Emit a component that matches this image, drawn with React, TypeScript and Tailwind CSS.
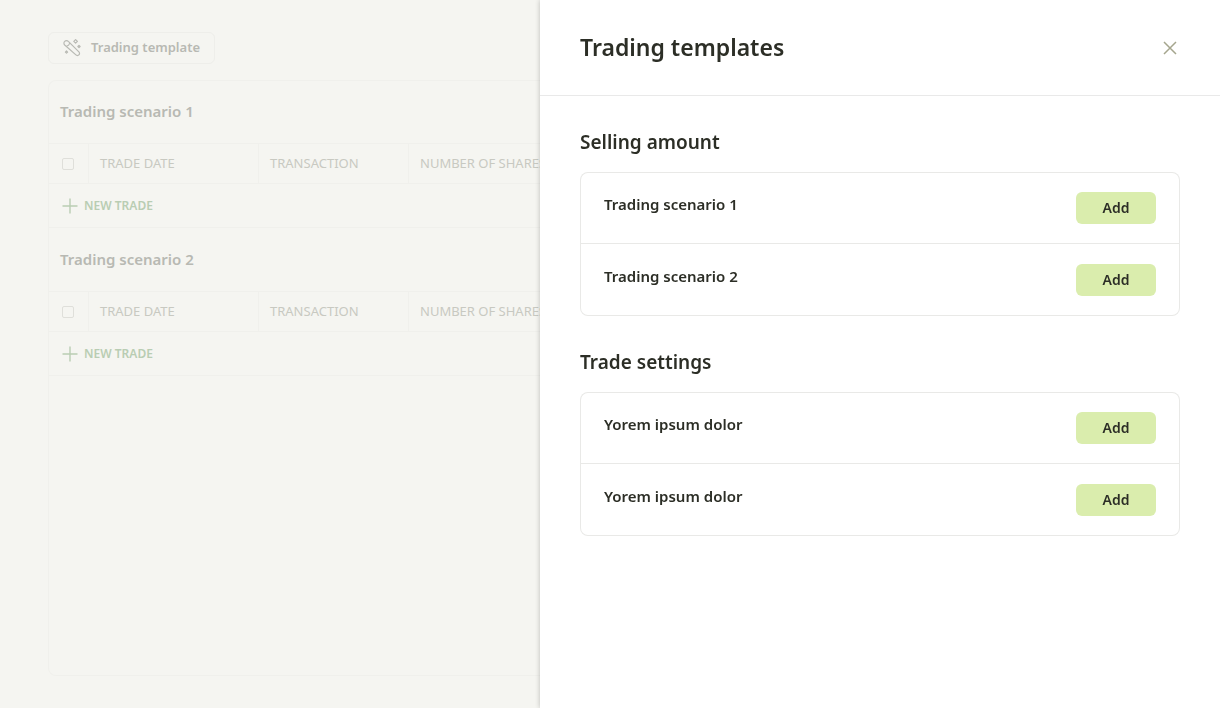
interface Template {
  id: string;
  name: string;
}

interface TemplateGroup {
  title: string;
  templates: Template[];
}

const scenarios = ['Trading scenario 1', 'Trading scenario 2'];

const groups: TemplateGroup[] = [
  {
    title: 'Selling amount',
    templates: [
      { id: 'scenario-1', name: 'Trading scenario 1' },
      { id: 'scenario-2', name: 'Trading scenario 2' },
    ],
  },
  {
    title: 'Trade settings',
    templates: [
      { id: 'settings-1', name: 'Yorem ipsum dolor' },
      { id: 'settings-2', name: 'Yorem ipsum dolor' },
    ],
  },
];

function WandIcon() {
  return (
    <svg
      width="18"
      height="18"
      viewBox="0 0 18 18"
      fill="none"
      stroke="currentColor"
      strokeWidth="1.2"
      strokeLinejoin="round"
      aria-hidden="true"
    >
      <path d="M1.7 2.4a2.5 2.5 0 0 1 3.6 0l10.6 10.5a2.1 2.1 0 0 1 0 3 2.1 2.1 0 0 1-3 0L1.7 6a2.5 2.5 0 0 1 0-3.6Z" />
      <path d="M3.5 7c1.2.2 3.3-1.6 3-3" />
      <path d="m12.6.6 1.8 1.8-1.8 1.8-1.8-1.8Z" />
      <path d="m16 6.4 1.1 1.1-1.1 1.1-1.1-1.1Z" />
      <path d="m3.5 12 1.1 1.1-1.1 1.1-1.1-1.1Z" />
    </svg>
  );
}

function PlusIcon() {
  return (
    <svg width="16" height="16" viewBox="0 0 16 16" stroke="currentColor" strokeWidth="1.4" aria-hidden="true">
      <path d="M8 .5v15M.5 8h15" />
    </svg>
  );
}

function CloseIcon() {
  return (
    <svg width="20" height="20" viewBox="0 0 20 20" stroke="currentColor" strokeWidth="1.5" aria-hidden="true">
      <path d="m4 4 12 12M16 4 4 16" />
    </svg>
  );
}

function ScenarioSection({ name }: { name: string }) {
  const headCell = 'border-l border-[#f0f0ec] pl-[11px] text-left font-normal';

  return (
    <section>
      <h2 className="flex h-16 items-center border-b border-[#f0f0ec] px-3 text-[15px] font-semibold text-[#b8b9b3]">
        {name}
      </h2>
      <table className="w-full table-fixed border-separate border-spacing-0 text-[13px] text-[#c8c9c1]">
        <thead>
          <tr className="h-10 [&>th]:border-b">
            <th className="w-10 border-[#f0f0ec] p-0">
              <input
                type="checkbox"
                aria-label={`Select all trades in ${name}`}
                className="mx-auto block size-3 appearance-none rounded-xs border border-[#dfdfda]"
              />
            </th>
            <th className={`w-[170px] ${headCell}`}>TRADE DATE</th>
            <th className={`w-[150px] ${headCell}`}>TRANSACTION</th>
            <th className={headCell}>NUMBER OF SHARES</th>
          </tr>
        </thead>
        <tbody>
          <tr className="h-11">
            <td colSpan={4} className="border-b border-[#f0f0ec] py-0 pl-[14px]">
              <button type="button" className="flex items-center gap-1.5 text-xs font-semibold text-[#b9cdb3]">
                <PlusIcon />
                NEW TRADE
              </button>
            </td>
          </tr>
        </tbody>
      </table>
    </section>
  );
}

function TemplateRow({ template }: { template: Template }) {
  return (
    <li className="flex h-18 items-start justify-between border-b border-[#e9e9e7] px-6 pt-5 last:border-b-0">
      <span className="text-[15px] leading-6 font-semibold">{template.name}</span>
      <button
        type="button"
        className="h-8 w-20 rounded-md bg-[#daedad] text-sm font-semibold hover:bg-[#cfe59b]"
      >
        Add
      </button>
    </li>
  );
}

function TemplatesDrawer() {
  return (
    <aside
      role="dialog"
      aria-labelledby="drawer-title"
      className="fixed inset-y-0 right-0 w-[680px] max-w-full overflow-y-auto bg-white text-[#2c2e26] shadow-[0_0_5px_rgba(0,0,0,0.24)]"
    >
      <header className="flex h-24 items-center justify-between border-b border-[#e9e9e9] px-10">
        <h1 id="drawer-title" className="text-[23px] font-semibold">
          Trading templates
        </h1>
        <button type="button" aria-label="Close" className="text-[#a5a68e]">
          <CloseIcon />
        </button>
      </header>
      <div className="flex flex-col gap-8 px-10 py-8">
        {groups.map((group) => (
          <section key={group.title} className="flex flex-col gap-4">
            <h2 className="text-[19px] leading-7 font-semibold">{group.title}</h2>
            <ul className="rounded-lg inset-ring inset-ring-[#e9e9e7]">
              {group.templates.map((template) => (
                <TemplateRow key={template.id} template={template} />
              ))}
            </ul>
          </section>
        ))}
      </div>
    </aside>
  );
}

export default function App() {
  return (
    <div className="min-h-screen bg-[#f5f5f1] font-['Noto_Sans',sans-serif]">
      <main className="flex min-h-screen flex-col items-start gap-4 px-12 py-8">
        <button
          type="button"
          className="flex h-8 items-center gap-2.5 rounded-md border border-[#eeeeea] px-3.5 text-[13px] font-semibold text-[#b8b9b3]"
        >
          <WandIcon />
          Trading template
        </button>
        <div className="w-full flex-1 rounded-lg inset-ring inset-ring-[#f0f0ec]">
          {scenarios.map((name) => (
            <ScenarioSection key={name} name={name} />
          ))}
        </div>
      </main>
      <TemplatesDrawer />
    </div>
  );
}
